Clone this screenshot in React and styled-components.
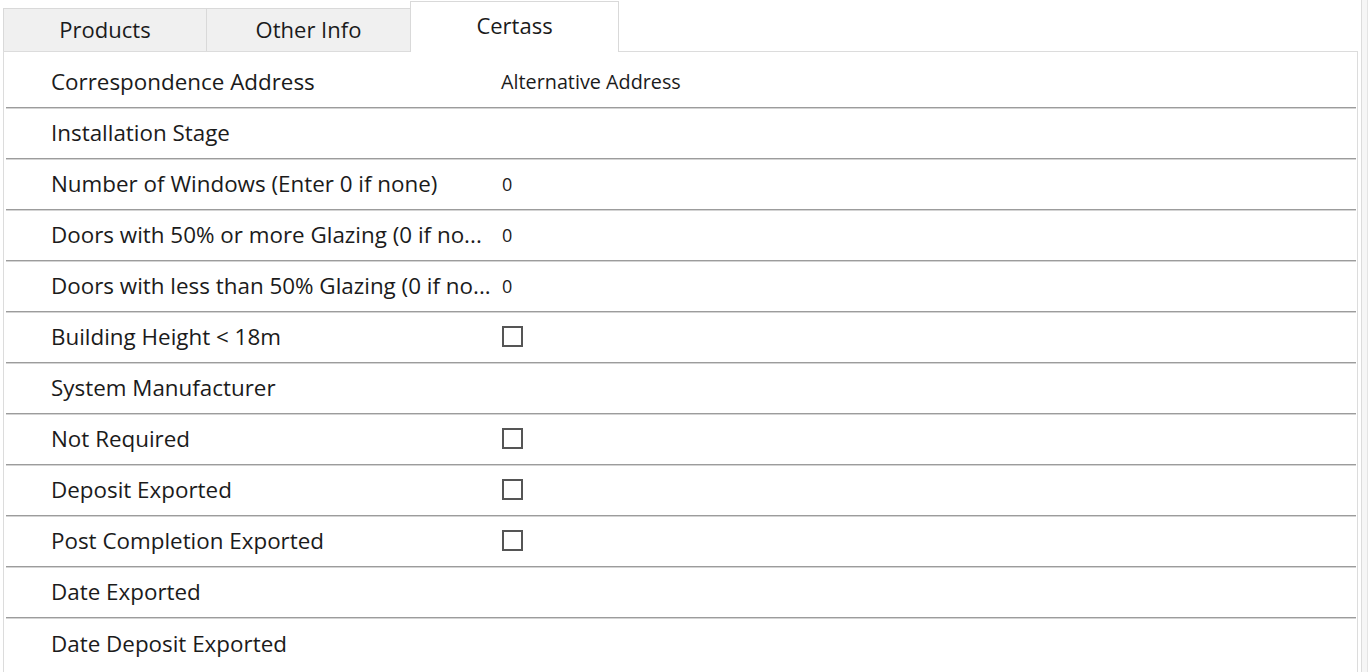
import React from "react";
import styled, { createGlobalStyle } from "styled-components";

const GlobalStyle = createGlobalStyle`
  html, body {
    margin: 0;
    padding: 0;
    background: #ffffff;
  }
  body {
    font-family: "Open Sans", "Noto Sans", "Liberation Sans", sans-serif;
    color: #1b1b1b;
  }
`;

const Page = styled.div`
  display: flex;
  width: 100vw;
  height: 100vh;
  overflow: hidden;
`;

const Main = styled.div`
  flex: 1;
  display: flex;
  flex-direction: column;
  min-width: 0;
`;

const EdgeStrip = styled.div`
  width: 5px;
  margin-right: 1px;
  border-left: 1px solid #dcdcdc;
  border-right: 1px solid #e4e4e4;
  background: #f6f6f6;
`;

const TabBar = styled.div`
  display: flex;
  align-items: flex-end;
  height: 51px;
  padding-left: 3px;
`;

const Tab = styled.div`
  box-sizing: border-box;
  display: flex;
  align-items: center;
  justify-content: center;
  width: ${(p) => p.$width}px;
  height: ${(p) => (p.$active ? 51 : 43)}px;
  margin-left: -1px;
  margin-bottom: ${(p) => (p.$active ? -1 : 0)}px;
  padding-bottom: ${(p) => (p.$active ? 5 : 2)}px;
  border: 1px solid #d9d9d9;
  border-bottom: none;
  background: ${(p) => (p.$active ? "#ffffff" : "#f0f0f0")};
  font-size: 22px;
  color: #1b1b1b;
  position: relative;
  z-index: ${(p) => (p.$active ? 2 : 1)};

  &:first-child {
    margin-left: 0;
  }
`;

const Panel = styled.div`
  flex: 1;
  box-sizing: border-box;
  width: 1355px;
  margin-left: 3px;
  padding-top: 5px;
  border: 1px solid #dcdcdc;
  border-bottom: none;
  display: flex;
  flex-direction: column;
`;

const Row = styled.div`
  box-sizing: border-box;
  display: flex;
  align-items: center;
  height: 51px;
  margin: 0 1px 0 2px;
  padding-left: 45px;
  padding-bottom: 1px;
  border-bottom: 1px solid #9c9c9c;
  box-shadow: 0 1px 0 #d4d4d4;

  &:last-child {
    border-bottom: none;
    box-shadow: none;
  }
`;

const Label = styled.div`
  width: 449px;
  flex-shrink: 0;
  font-size: 22.4px;
  white-space: nowrap;
  overflow: hidden;
`;

const Value = styled.div`
  font-size: ${(p) => (p.$small ? 19.8 : 18)}px;
  padding-left: ${(p) => (p.$small ? 1 : 2)}px;
  display: flex;
  align-items: center;
`;

const Check = styled.input.attrs({ type: "checkbox" })`
  appearance: none;
  -webkit-appearance: none;
  box-sizing: border-box;
  width: 21px;
  height: 21px;
  margin: 0;
  border: 2px solid #555555;
  border-radius: 0;
  background: #ffffff;
`;

const tabs = [
  { name: "Products", width: 204 },
  { name: "Other Info", width: 205 },
  { name: "Certass", width: 209, active: true },
];

const rows = [
  { label: "Correspondence Address", value: "Alternative Address", small: true },
  { label: "Installation Stage" },
  { label: "Number of Windows (Enter 0 if none)", value: "0" },
  { label: "Doors with 50% or more Glazing (0 if no...", value: "0" },
  { label: "Doors with less than 50% Glazing (0 if no...", value: "0" },
  { label: "Building Height < 18m", check: true },
  { label: "System Manufacturer" },
  { label: "Not Required", check: true },
  { label: "Deposit Exported", check: true },
  { label: "Post Completion Exported", check: true },
  { label: "Date Exported" },
  { label: "Date Deposit Exported" },
];

export default function App() {
  return (
    <>
      <GlobalStyle />
      <Page>
        <Main>
          <TabBar>
            {tabs.map((t) => (
              <Tab key={t.name} $width={t.width} $active={t.active}>
                {t.name}
              </Tab>
            ))}
          </TabBar>
          <Panel>
            {rows.map((r) => (
              <Row key={r.label}>
                <Label>{r.label}</Label>
                {r.value && <Value $small={r.small}>{r.value}</Value>}
                {r.check && (
                  <Value>
                    <Check readOnly />
                  </Value>
                )}
              </Row>
            ))}
          </Panel>
        </Main>
        <EdgeStrip />
      </Page>
    </>
  );
}
